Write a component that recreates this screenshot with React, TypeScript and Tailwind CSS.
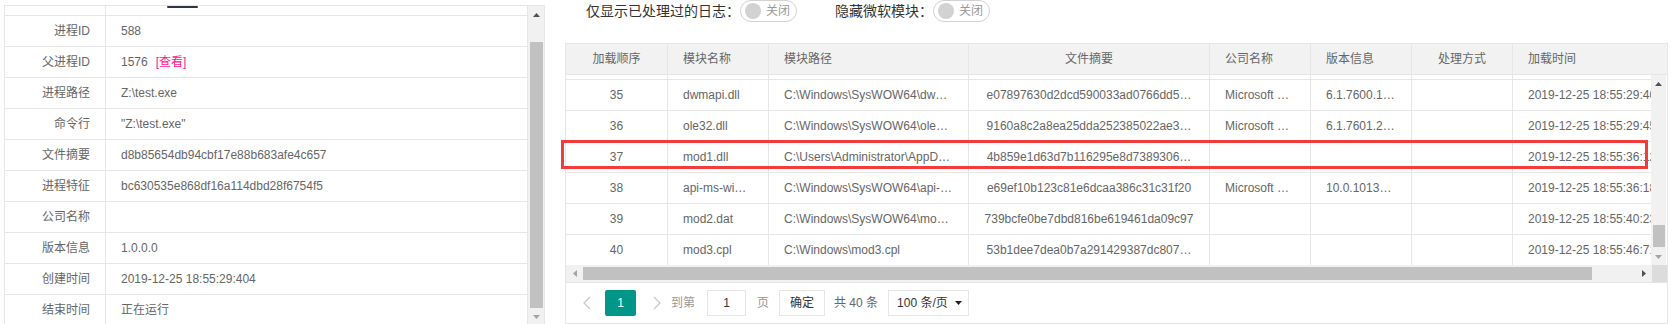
import type { ReactNode } from 'react';

const font = "font-['Liberation_Sans','Noto_Sans_CJK_SC',sans-serif]";

const info: { label: string; value: string; link?: boolean }[] = [
  { label: '进程ID', value: '588' },
  { label: '父进程ID', value: '1576', link: true },
  { label: '进程路径', value: 'Z:\\test.exe' },
  { label: '命令行', value: '"Z:\\test.exe"' },
  { label: '文件摘要', value: 'd8b85654db94cbf17e88b683afe4c657' },
  { label: '进程特征', value: 'bc630535e868df16a114dbd28f6754f5' },
  { label: '公司名称', value: '' },
  { label: '版本信息', value: '1.0.0.0' },
  { label: '创建时间', value: '2019-12-25 18:55:29:404' },
  { label: '结束时间', value: '正在运行' }
];

const cols = [
  { title: '加载顺序', w: 'w-[102px]', center: true },
  { title: '模块名称', w: 'w-[101px]', center: false },
  { title: '模块路径', w: 'w-[200px]', center: false },
  { title: '文件摘要', w: 'w-[241px]', center: true },
  { title: '公司名称', w: 'w-[101px]', center: false },
  { title: '版本信息', w: 'w-[101px]', center: false },
  { title: '处理方式', w: 'w-[101px]', center: true },
  { title: '加载时间', w: 'w-[170px]', center: false }
];

const rows: string[][] = [
  ['35', 'dwmapi.dll', 'C:\\Windows\\SysWOW64\\dw…', 'e07897630d2dcd590033ad0766dd5…', 'Microsoft …', '6.1.7600.1…', '', '2019-12-25 18:55:29:404'],
  ['36', 'ole32.dll', 'C:\\Windows\\SysWOW64\\ole…', '9160a8c2a8ea25dda252385022ae3…', 'Microsoft …', '6.1.7601.2…', '', '2019-12-25 18:55:29:451'],
  ['37', 'mod1.dll', 'C:\\Users\\Administrator\\AppD…', '4b859e1d63d7b116295e8d7389306…', '', '', '', '2019-12-25 18:55:36:120'],
  ['38', 'api-ms-wi…', 'C:\\Windows\\SysWOW64\\api-…', 'e69ef10b123c81e6dcaa386c31c31f20', 'Microsoft …', '10.0.1013…', '', '2019-12-25 18:55:36:187'],
  ['39', 'mod2.dat', 'C:\\Windows\\SysWOW64\\mo…', '739bcfe0be7dbd816be619461da09c97', '', '', '', '2019-12-25 18:55:40:231'],
  ['40', 'mod3.cpl', 'C:\\Windows\\mod3.cpl', '53b1dee7dea0b7a291429387dc807…', '', '', '', '2019-12-25 18:55:46:712']
];

function Tri({ dir, color }: { dir: 'up' | 'down' | 'left' | 'right'; color: string }) {
  const pts = {
    up: '0,4 3.5,0 7,4',
    down: '0,0 7,0 3.5,4',
    left: '4,0 4,7 0,3.5',
    right: '0,0 4,3.5 0,7'
  }[dir];
  const vertical = dir === 'up' || dir === 'down';
  return (
    <svg width={vertical ? 7 : 4} height={vertical ? 4 : 7} viewBox={vertical ? '0 0 7 4' : '0 0 4 7'}>
      <polygon points={pts} fill={color} />
    </svg>
  );
}

function Switch() {
  return (
    <span className="inline-flex h-[22px] items-center gap-[5px] rounded-full border border-[#d2d2d2] bg-white pl-[4px] pr-[6px]">
      <span className="h-4 w-4 rounded-full bg-[#d2d2d2]" />
      <span className="text-[12px] text-[#999]">关闭</span>
    </span>
  );
}

function Chevron({ left }: { left?: boolean }) {
  return (
    <svg width="8" height="14" viewBox="0 0 8 14">
      <polyline
        points={left ? '7,1 1,7 7,13' : '1,1 7,7 1,13'}
        fill="none"
        stroke="#c8c8c8"
        strokeWidth="1.2"
      />
    </svg>
  );
}

function InfoPanel() {
  return (
    <div className="relative ml-[4px] mt-[5px] flex h-[330px] w-[541px] shrink-0 border-x border-t border-[#e6e6e6]">
      <span className="absolute left-[162px] top-0 h-[2px] w-[31px] rounded-sm bg-[#2f3542]" />
      <div className="flex-1 border-r border-[#e6e6e6]">
        <div className="flex h-[10px] border-b border-[#e6e6e6]">
          <div className="w-[101px] border-r border-[#e6e6e6]" />
        </div>
        {info.map((item) => (
          <div key={item.label} className="flex h-[31px] border-b border-[#e6e6e6] text-[12px] leading-[30px] text-[#666]">
            <div className="w-[101px] shrink-0 border-r border-[#e6e6e6] pr-[15px] text-right">{item.label}</div>
            <div className="flex-1 whitespace-nowrap pl-[15px]">
              {item.value}
              {item.link ? <span className="ml-2 text-[#ff1493]">[查看]</span> : null}
            </div>
          </div>
        ))}
      </div>
      <div className="flex w-[16px] flex-col bg-[#f1f1f1]">
        <div className="flex h-[17px] items-center justify-center">
          <Tri dir="up" color="#505050" />
        </div>
        <div className="h-[19px]" />
        <div className="ml-[2px] h-[266px] w-[13px] bg-[#c1c1c1]" />
        <div className="flex h-[17px] items-center justify-center">
          <Tri dir="down" color="#a3a3a3" />
        </div>
      </div>
    </div>
  );
}

function Cell({ w, center, children }: { w: string; center: boolean; children?: ReactNode }) {
  return (
    <div
      className={`${w} shrink-0 overflow-hidden whitespace-nowrap border-r border-[#e6e6e6] px-[15px] ${
        center ? 'text-center' : 'text-left'
      }`}
    >
      {children}
    </div>
  );
}

function ModuleTable() {
  return (
    <div className="ml-[20px] flex w-[1103px] shrink-0 flex-col">
      <div className="flex h-[22px] items-center pl-[21px] text-[14px] text-[#333]">
        <span>仅显示已处理过的日志：</span>
        <Switch />
        <span className="ml-[38px]">隐藏微软模块：</span>
        <Switch />
      </div>

      <div className="mt-[21px] h-[300px] border border-[#e6e6e6] text-[12px] text-[#666]">
        <div className="flex h-[31px] border-b border-[#e6e6e6] bg-[#f2f2f2] leading-[30px]">
          {cols.slice(0, 7).map((c) => (
            <Cell key={c.title} w={c.w} center={c.center}>
              {c.title}
            </Cell>
          ))}
          <div className="flex-1 pl-[15px]">加载时间</div>
        </div>

        <div className="flex h-[190px]">
          <div className="w-[1085px] overflow-hidden">
            <div className="flex h-[5px] w-max border-b border-[#e6e6e6]">
              {cols.map((c) => (
                <Cell key={c.title} w={c.w} center={c.center} />
              ))}
            </div>
            {rows.map((r) => (
              <div key={r[0]} className="flex h-[31px] w-max border-b border-[#e6e6e6] leading-[30px]">
                {cols.map((c, i) => (
                  <Cell key={c.title} w={c.w} center={c.center}>
                    {r[i]}
                  </Cell>
                ))}
              </div>
            ))}
          </div>
          <div className="flex w-[15px] flex-col bg-[#f1f1f1]">
            <div className="flex h-[17px] items-center justify-center">
              <Tri dir="up" color="#505050" />
            </div>
            <div className="h-[133px]" />
            <div className="mx-auto h-[22px] w-[12px] bg-[#c1c1c1]" />
            <div className="flex-1" />
            <div className="flex h-[17px] items-center justify-center">
              <Tri dir="down" color="#a3a3a3" />
            </div>
          </div>
        </div>

        <div className="flex h-[18px] border-b border-[#e6e6e6] bg-[#f1f1f1]">
          <div className="flex w-[17px] items-center justify-center">
            <Tri dir="left" color="#a3a3a3" />
          </div>
          <div className="flex flex-1 items-center">
            <div className="h-[13px] w-[1009px] bg-[#c1c1c1]" />
          </div>
          <div className="flex w-[17px] items-center justify-center">
            <Tri dir="right" color="#505050" />
          </div>
          <div className="w-[15px] bg-[#dcdcdc]" />
        </div>

        <div className="mt-[7px] flex h-[26px] items-center">
          <span className="ml-[4px] flex w-[34px] justify-center">
            <Chevron left />
          </span>
          <span className="ml-[1px] flex h-[26px] w-[31px] items-center justify-center rounded-[2px] bg-[#009688] text-white">
            1
          </span>
          <span className="ml-[7px] flex w-[28px] justify-center">
            <Chevron />
          </span>
          <span className="text-[#999]">到第</span>
          <span className="ml-[12px] flex h-[26px] w-[39px] items-center justify-center border border-[#e6e6e6] text-[#333]">
            1
          </span>
          <span className="ml-[11px] text-[#999]">页</span>
          <span className="ml-[10px] flex h-[26px] w-[46px] items-center justify-center border border-[#e6e6e6] text-[#333]">
            确定
          </span>
          <span className="ml-[9px]">共 40 条</span>
          <span className="ml-[10px] flex h-[26px] w-[81px] items-center justify-between border border-[#e6e6e6] pl-[8px] pr-[6px] text-[#333]">
            100 条/页
            <Tri dir="down" color="#222" />
          </span>
        </div>
      </div>
    </div>
  );
}

export default function App() {
  return (
    <div className={`${font} relative flex h-[324px] w-[1671px] overflow-hidden bg-white`}>
      <InfoPanel />
      <ModuleTable />
      <div className="pointer-events-none absolute left-[561px] top-[140px] h-[29px] w-[1087px] border-[3px] border-[#f23b3b]" />
    </div>
  );
}
